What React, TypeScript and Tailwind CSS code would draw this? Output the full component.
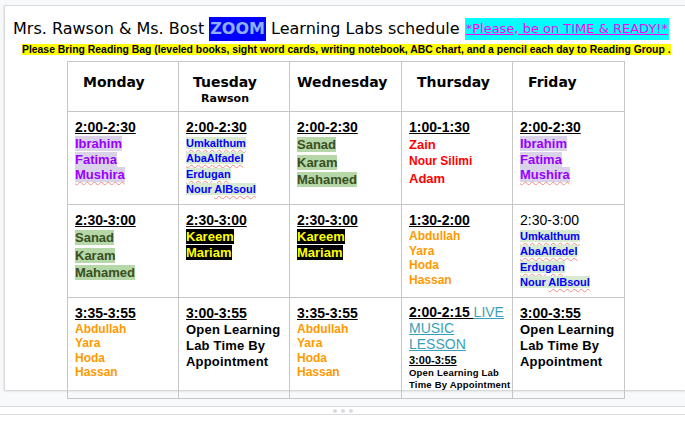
import React from 'react'

const comic = "font-['Comic_Sans_MS','DejaVu_Sans',sans-serif]"
const arial = "font-['Liberation_Sans',Arial,sans-serif]"
const squiggle = 'underline decoration-wavy decoration-[#f28b82] decoration-1 underline-offset-2'

const Time = ({ children }: { children: React.ReactNode }) => (
  <div className="text-[14px] font-bold underline leading-[17px] text-black">{children}</div>
)

const Purple = ({ names }: { names: [string, boolean][] }) => (
  <div className="text-[13px] font-bold leading-[15.5px] text-[#9900ff]">
    {names.map(([n, sq]) => (
      <div key={n}>
        <span className={`bg-[#d9d2e9] ${sq ? squiggle : ''}`}>{n}</span>
      </div>
    ))}
  </div>
)

const Blue = () => (
  <div className="text-[11px] font-bold leading-[15.4px] text-[#0000ff]">
    <div><span className={`bg-[#d9ead3] ${squiggle}`}>Umkalthum</span></div>
    <div><span className={`bg-[#d9ead3] ${squiggle}`}>AbaAlfadel</span></div>
    <div><span className={`bg-[#d9ead3] ${squiggle}`}>Erdugan</span></div>
    <div>
      <span className="bg-[#d9ead3]">Nour </span>
      <span className={`bg-[#d9ead3] ${squiggle}`}>AlBsoul</span>
    </div>
  </div>
)

const Green = () => (
  <div className="text-[13px] font-bold leading-[17.5px] text-[#38501f]">
    {['Sanad', 'Karam', 'Mahamed'].map((n) => (
      <div key={n}>
        <span className="bg-[#b6d7a8]">{n}</span>
      </div>
    ))}
  </div>
)

const Black = () => (
  <div className="text-[13px] font-bold leading-[15.5px] text-[#ffff00]">
    <div><span className="bg-black">Kareem</span></div>
    <div><span className="bg-black">Mariam</span></div>
  </div>
)

const Orange = ({ lh = 'leading-[14.3px]' }: { lh?: string }) => (
  <div className={`text-[12px] font-bold ${lh} text-[#ff9900]`}>
    {['Abdullah', 'Yara', 'Hoda', 'Hassan'].map((n) => (
      <div key={n}>{n}</div>
    ))}
  </div>
)

const OpenLab = () => (
  <div className="text-[13px] font-bold leading-[16px] text-black tracking-[0.2px]">
    Open Learning
    <br />
    Lab Time By
    <br />
    Appointment
  </div>
)

const days = [
  { name: 'Monday', pl: 'pl-[15px]' },
  { name: 'Tuesday', pl: 'pl-[14px]', sub: 'Rawson' },
  { name: 'Wednesday', pl: 'pl-[7px]' },
  { name: 'Thursday', pl: 'pl-[15px]' },
  { name: 'Friday', pl: 'pl-[15px]' },
]

const cell = 'border-r border-b border-[#c6c6c6] pl-[7px]'

export default function App() {
  return (
    <div className={`w-[685px] h-[431px] overflow-hidden bg-white ${arial}`}>
      <div className="bg-[#f8f9fa] pt-[5px] pl-[4px] border-b border-[#dadce0] h-[407px]">
        {/* page */}
        <div className="bg-white border-l border-t border-[#dadce0] h-[385px] shadow-[0_1px_2px_rgba(60,64,67,0.25)]">
          <div className={`${comic} pt-[11px] pl-[8px] text-[16px] leading-[24px] text-black whitespace-nowrap flex items-center`}>
            <span>Mrs. Rawson &amp; Ms. Bost&nbsp;</span>
            <span className="bg-[#0000ff] text-[#8fb0ff] font-bold px-[1px]">ZOOM</span>
            <span>&nbsp;Learning Labs schedule&nbsp;</span>
            <span className="bg-[#00ffff] text-[#ff00ff] text-[13px] leading-[22px] underline px-[1px]">
              *Please, be on TIME &amp; READY!*
            </span>
          </div>
          <div className="pl-[17px] pt-[3px] whitespace-nowrap text-[10.4px] leading-[12px]">
            <span className="bg-[#ffff00] font-bold text-black">
              Please Bring Reading Bag (leveled books, sight word cards, writing notebook, ABC chart, and a pencil each day to Reading Group .
            </span>
          </div>

          {/* schedule table */}
          <div className="ml-[62px] mt-[5px] w-[558px] grid grid-cols-[111px_111px_112px_111px_112px] grid-rows-[50px_93px_93px_101px] border-l border-t border-[#c6c6c6]">
            {days.map((d) => (
              <div key={d.name} className={`border-r border-b border-[#c6c6c6] ${d.pl} pt-[8px] ${comic}`}>
                <div className="inline-flex flex-col items-center">
                  <div className="text-[14px] font-bold leading-[21px] text-black">{d.name}</div>
                  {d.sub && (
                    <div className="text-[11px] font-bold leading-[14px] text-black -mt-[1px]">{d.sub}</div>
                  )}
                </div>
              </div>
            ))}

            {/* row 1 */}
            <div className={`${cell} pt-[7px]`}>
              <Time>2:00-2:30</Time>
              <Purple names={[['Ibrahim', false], ['Fatima', false], ['Mushira', true]]} />
            </div>
            <div className={`${cell} pt-[7px]`}>
              <Time>2:00-2:30</Time>
              <Blue />
            </div>
            <div className={`${cell} pt-[7px]`}>
              <Time>2:00-2:30</Time>
              <Green />
            </div>
            <div className={`${cell} pt-[7px]`}>
              <Time>1:00-1:30</Time>
              <div className="font-bold leading-[17px] text-[#ff0000]">
                <div className="text-[13px]">Zain</div>
                <div className="text-[12px]">Nour Silimi</div>
                <div className="text-[13px]">Adam</div>
              </div>
            </div>
            <div className={`${cell} pt-[7px]`}>
              <Time>2:00-2:30</Time>
              <Purple names={[['Ibrahim', false], ['Fatima', false], ['Mushira', true]]} />
            </div>

            {/* row 2 */}
            <div className={`${cell} pt-[7px]`}>
              <Time>2:30-3:00</Time>
              <Green />
            </div>
            <div className={`${cell} pt-[7px]`}>
              <Time>2:30-3:00</Time>
              <Black />
            </div>
            <div className={`${cell} pt-[7px]`}>
              <Time>2:30-3:00</Time>
              <Black />
            </div>
            <div className={`${cell} pt-[7px]`}>
              <Time>1:30-2:00</Time>
              <Orange lh="leading-[14.5px]" />
            </div>
            <div className={`${cell} pt-[7px]`}>
              <div className="text-[14px] leading-[17px] text-black">2:30-3:00</div>
              <Blue />
            </div>

            {/* row 3 */}
            <div className={`${cell} pt-[7px]`}>
              <Time>3:35-3:55</Time>
              <Orange />
            </div>
            <div className={`${cell} pt-[7px]`}>
              <Time>3:00-3:55</Time>
              <OpenLab />
            </div>
            <div className={`${cell} pt-[7px]`}>
              <Time>3:35-3:55</Time>
              <Orange />
            </div>
            <div className={`${cell} pt-[6px]`}>
              <div className="text-[14px] leading-[16px] text-[#3a9fba] w-[95px]">
                <span className="font-bold underline text-black">2:00-2:15 </span>
                <span className="underline">LIVE MUSIC LESSON</span>
              </div>
              <div className="text-[11px] font-bold underline leading-[14px] text-black mt-[1px]">3:00-3:55</div>
              <div className="text-[9.5px] font-bold leading-[11.5px] text-black tracking-[0.2px]">
                Open Learning Lab
                <br />
                Time By Appointment
              </div>
            </div>
            <div className={`${cell} pt-[7px]`}>
              <Time>3:00-3:55</Time>
              <OpenLab />
            </div>
          </div>
        </div>
      </div>
      <div className="h-[8px] border-b border-[#dadce0] flex items-center justify-center gap-[4px]">
        <span className="w-[4px] h-[4px] rounded-full bg-[#dadce0]" />
        <span className="w-[4px] h-[4px] rounded-full bg-[#dadce0]" />
        <span className="w-[4px] h-[4px] rounded-full bg-[#dadce0]" />
      </div>
    </div>
  )
}
